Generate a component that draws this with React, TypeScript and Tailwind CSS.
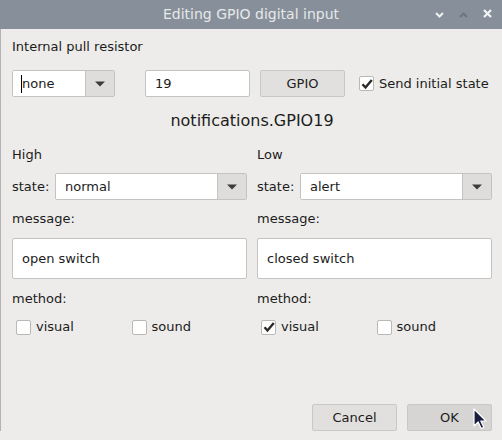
import { ReactNode } from "react";

function Arrow() {
  return (
    <svg width="10" height="6" viewBox="0 0 10 6" className="block">
      <path d="M0 0.5h10L5 5.5z" fill="#3c3c3c" />
    </svg>
  );
}

function Check() {
  return (
    <svg width="12" height="12" viewBox="0 0 12 12" className="block">
      <path d="M1.5 6.2l3 3.3L10.8 2" fill="none" stroke="#2a2a2a" strokeWidth="2.4" />
    </svg>
  );
}

function Box({ checked, label }: { checked?: boolean; label: string }) {
  return (
    <label className="flex items-center gap-[5px]">
      <span className="flex h-[15px] w-[15px] flex-none items-center justify-center rounded-[2px] border border-[#b9b8b6] bg-white">
        {checked && <Check />}
      </span>
      <span>{label}</span>
    </label>
  );
}

function Combo({ value, caret, className }: { value: string; caret?: boolean; className: string }) {
  return (
    <div className={`flex h-[27px] rounded-[2px] border border-[#c4c3c1] ${className}`}>
      <div className="relative flex flex-1 items-center bg-white pl-[9px]">
        {caret && <span className="absolute left-[8px] top-[4px] h-[18px] w-px bg-black" />}
        {value}
      </div>
      <div className="flex w-[29px] items-center justify-center border-l border-[#c4c3c1] bg-[#dedddb]">
        <Arrow />
      </div>
    </div>
  );
}

function Btn({ children, className = "" }: { children: ReactNode; className?: string }) {
  return (
    <button className={`flex h-[27px] w-[85px] items-center justify-center rounded-[2px] border border-[#c9c8c6] ${className}`}>
      {children}
    </button>
  );
}

function Side({ title, state, message, visual }: { title: string; state: string; message: string; visual?: boolean }) {
  return (
    <div className="flex w-[235px] flex-col">
      <div className="leading-[18px]">{title}</div>
      <div className="mt-[9px] flex items-center">
        <span className="w-[43px]">state:</span>
        <Combo value={state} className="flex-1" />
      </div>
      <div className="mt-[10px] leading-[18px]">message:</div>
      <div className="mt-[10px] flex h-[41px] items-center rounded-[2px] border border-[#c4c3c1] bg-white pl-[9px]">
        {message}
      </div>
      <div className="mt-[11px] leading-[18px]">method:</div>
      <div className="mt-[10px] grid grid-cols-2 pl-[4px] leading-[18px]">
        <Box checked={visual} label="visual" />
        <Box label="sound" />
      </div>
    </div>
  );
}

export default function App() {
  return (
    <div
      className="relative h-[440px] w-[502px] overflow-hidden bg-[#edecea] text-[13px] text-[#1c1c1c]"
      style={{ fontFamily: "'DejaVu Sans', sans-serif" }}
    >
      <div className="relative flex h-[29px] items-center justify-center bg-[#87909a] text-[14px] text-[#e6e8ea]">
        Editing GPIO digital input
        <div className="absolute right-[10px] top-[11px] flex items-center gap-[15px]">
          <svg width="9" height="6" viewBox="0 0 9 6">
            <path d="M1 1l3.5 3.5L8 1" fill="none" stroke="#eef0f2" strokeWidth="2" />
          </svg>
          <svg width="9" height="6" viewBox="0 0 9 6">
            <path d="M1 5l3.5-3.5L8 5" fill="none" stroke="#6d747c" strokeWidth="2" />
          </svg>
          <svg width="9" height="9" viewBox="0 0 9 9" className="-mt-[2px]">
            <path d="M1 1l7 7M8 1L1 8" stroke="#f2f3f4" strokeWidth="2.2" />
          </svg>
        </div>
      </div>

      <div className="border-l border-[#b5b4b2] pl-[11px] pr-[10px]">
        <div className="pt-[9px] leading-[18px]">Internal pull resistor</div>

        <div className="mt-[14px] flex items-center">
          <Combo value="none" caret className="w-[103px]" />
          <div className="ml-[30px] flex h-[27px] w-[105px] items-center rounded-[2px] border border-[#c4c3c1] bg-white pl-[9px]">
            19
          </div>
          <Btn className="ml-[10px] bg-[#e1e0de]">GPIO</Btn>
          <div className="ml-[14px]">
            <Box checked label="Send initial state" />
          </div>
        </div>

        <div className="mt-[14px] text-center text-[16px] leading-[20px]">notifications.GPIO19</div>

        <div className="mt-[15px] flex justify-between">
          <Side title="High" state="normal" message="open switch" />
          <Side title="Low" state="alert" message="closed switch" visual />
        </div>

        <div className="mt-[68px] flex justify-end gap-[10px]">
          <Btn className="bg-[#e1e0de]">Cancel</Btn>
          <Btn className="bg-[#d6d5d3]">OK</Btn>
        </div>
      </div>

      <svg
        width="16"
        height="22"
        viewBox="0 0 16 22"
        className="absolute left-[473px] top-[408px]"
      >
        <path
          d="M1 1v17l4.2-4 3 6.5 2.6-1.2-3-6.3H13z"
          fill="#1a1d3f"
          stroke="#ffffff"
          strokeWidth="1.2"
          strokeLinejoin="round"
        />
      </svg>
    </div>
  );
}
